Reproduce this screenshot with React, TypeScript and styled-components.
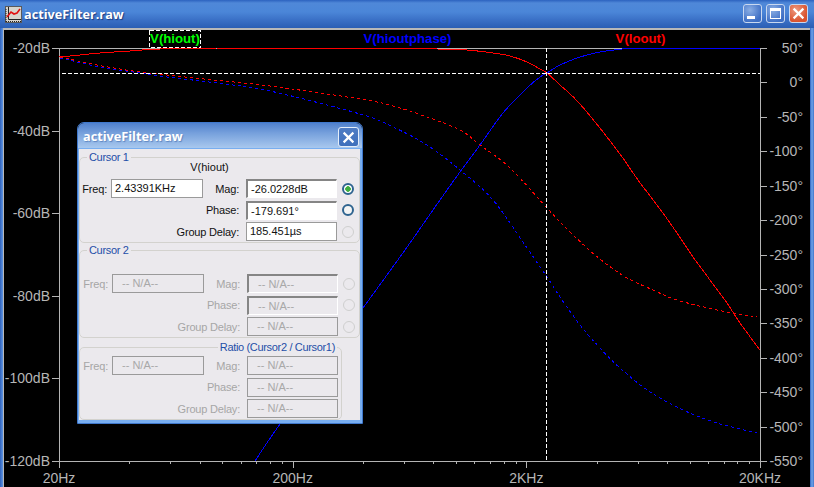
import styled, { createGlobalStyle } from "styled-components";

type Pt = [number, number];

const redSolid: Pt[] = [[59, 57], [70, 56], [100, 53], [130, 51], [160, 49], [216, 49]];
const redSolid2: Pt[] = [[437, 49], [467, 50], [493, 53], [510, 56], [527, 62], [540, 69], [547, 73], [560, 85], [580, 104], [617, 150], [638, 180], [660, 209], [677, 233], [693, 257], [710, 280], [727, 303], [740, 323], [760, 350]];
const blueSolid: Pt[] = [[255, 461], [280, 424], [363, 308], [405, 250], [440, 200], [460, 172], [480, 145], [503, 113], [527, 88], [540, 77], [547, 73], [560, 65], [580, 57], [600, 52], [630, 48]];
const redDash: Pt[] = [[60, 57], [97, 65], [133, 71], [167, 75], [213, 80], [270, 86], [360, 99], [393, 106], [427, 117], [460, 130], [480, 145], [510, 168], [547, 208], [563, 225], [587, 248], [605, 263], [627, 278], [653, 290], [677, 300], [717, 310], [757, 317]];
const blueDash: Pt[] = [[60, 58], [100, 67], [133, 72], [167, 77], [217, 83], [270, 91], [360, 114], [393, 127], [427, 145], [460, 170], [493, 200], [527, 248], [547, 277], [560, 297], [580, 325], [600, 348], [620, 368], [650, 392], [683, 410], [717, 423], [757, 433]];

// catmull-rom through the read-off points
function curve(p: Pt[]) {
  let d = `M${p[0][0]} ${p[0][1]}`;
  for (let i = 0; i < p.length - 1; i++) {
    const a = p[Math.max(i - 1, 0)];
    const b = p[i];
    const c = p[i + 1];
    const e = p[Math.min(i + 2, p.length - 1)];
    d += `C${b[0] + (c[0] - a[0]) / 6} ${b[1] + (c[1] - a[1]) / 6} ${c[0] - (e[0] - b[0]) / 6} ${c[1] - (e[1] - b[1]) / 6} ${c[0]} ${c[1]}`;
  }
  return d;
}

const LEFT = 59;
const RIGHT = 760;
const TOP = 48;
const BOTTOM = 461;
const DECADE = (RIGHT - LEFT) / 3;

const dbLabels = ["-20dB", "-40dB", "-60dB", "-80dB", "-100dB", "-120dB"];
const degLabels = ["50°", "0°", "-50°", "-100°", "-150°", "-200°", "-250°", "-300°", "-350°", "-400°", "-450°", "-500°", "-550°"];
const freqLabels = ["20Hz", "200Hz", "2KHz", "20KHz"];

function Chart() {
  const minor: number[] = [];
  for (let d = 0; d < 3; d++) {
    for (let k = 2; k < 10; k++) minor.push(LEFT + DECADE * (d + Math.log10(k)));
  }
  return (
    <PlotSvg viewBox="4 30 806 457" width={806} height={457}>
      <g stroke="#b4b4b4" fill="none" shapeRendering="crispEdges">
        <path d={`M${LEFT}.5 ${TOP}V${BOTTOM}M${RIGHT}.5 ${TOP}V${BOTTOM}M52 ${TOP}.5H767M52 ${BOTTOM}.5H767`} />
        {dbLabels.map((_, i) => {
          const y = Math.round(TOP + ((BOTTOM - TOP) / 5) * i);
          return <path key={i} d={`M52 ${y}.5H59`} />;
        })}
        {degLabels.map((_, i) => {
          const y = Math.round(TOP + ((BOTTOM - TOP) / 12) * i);
          return <path key={i} d={`M760 ${y}.5H767`} />;
        })}
        {minor.map((x, i) => (
          <path key={i} d={`M${Math.round(x)}.5 ${BOTTOM}V464`} />
        ))}
        {[0, 1, 2, 3].map((d) => (
          <path key={d} d={`M${Math.round(LEFT + DECADE * d)}.5 ${BOTTOM}V468`} />
        ))}
      </g>

      <g fill="none" strokeWidth={1} shapeRendering="crispEdges">
        <path d={curve(redDash)} stroke="#ff0000" strokeDasharray="3 3" />
        <path d={curve(blueDash)} stroke="#0000ff" strokeDasharray="3 3" />
        <path d={curve(redSolid)} stroke="#ff0000" />
        <path d="M217 48.5H437" stroke="#ff0000" />
        <path d={curve(redSolid2)} stroke="#ff0000" />
        <path d={curve(blueSolid)} stroke="#0000ff" />
        <path d="M630 48.5H760" stroke="#0000ff" />
        <path d="M62 73.5H760M546.5 48V461" stroke="#ffffff" strokeDasharray="4 2" />
        <rect x="149.5" y="30.5" width="51" height="17" stroke="#ffffff" strokeDasharray="4 2" />
      </g>

      {dbLabels.map((t, i) => (
        <AxisText key={t} x={50} y={TOP + ((BOTTOM - TOP) / 5) * i + 5} textAnchor="end">{t}</AxisText>
      ))}
      {degLabels.map((t, i) => (
        <AxisText key={t} x={803} y={TOP + ((BOTTOM - TOP) / 12) * i + 5} textAnchor="end">{t}</AxisText>
      ))}
      {freqLabels.map((t, i) => (
        <AxisText key={t} x={LEFT + DECADE * i} y={483} textAnchor="middle">{t}</AxisText>
      ))}

      <TraceName x={175} y={43} textAnchor="middle" fill="#00ff00">V(hiout)</TraceName>
      <TraceName x={407.5} y={43} textAnchor="middle" fill="#0000ff">V(hioutphase)</TraceName>
      <TraceName x={640.5} y={43} textAnchor="middle" fill="#ff0000">V(loout)</TraceName>
    </PlotSvg>
  );
}

function AppIcon() {
  return (
    <svg width="17" height="17" viewBox="0 0 17 17">
      <rect x="0.5" y="0.5" width="16" height="16" fill="#d8d4cc" stroke="#5a5a5a" />
      <path d="M3.5 1V13.5H16" stroke="#222" fill="none" />
      <path d="M1 3V16M1 15.5H16" stroke="#222" strokeDasharray="1 1" fill="none" />
      <path d="M2 11L6 6L9 8L12 7L15 3" stroke="#e01010" strokeWidth="1.6" fill="none" />
    </svg>
  );
}

function CloseGlyph({ size }: { size: number }) {
  return (
    <svg width={size} height={size} viewBox="0 0 12 12">
      <path d="M1.5 1.5L10.5 10.5M10.5 1.5L1.5 10.5" stroke="#fff" strokeWidth="2" fill="none" />
    </svg>
  );
}

type RowProps = {
  label: string;
  value: string;
  sunken?: boolean;
  off?: boolean;
  radio?: "on" | "idle" | "off";
  freq?: string;
};

function Row({ label, value, sunken, off, radio, freq }: RowProps) {
  return (
    <>
      {freq ? (
        <>
          <Label $off={off} $flush>Freq:</Label>
          <Box $off={off}>{freq}</Box>
          <Label $off={off}>{label}</Label>
        </>
      ) : (
        <Label $off={off} $span={3}>{label}</Label>
      )}
      <Box $off={off} $sunken={sunken}>{value}</Box>
      {radio && <Radio $state={radio} />}
    </>
  );
}

export default function App() {
  return (
    <>
      <Global />
      <Window>
        <TitleBar>
          <AppIcon />
          <WindowTitle>activeFilter.raw</WindowTitle>
          <WindowButtons>
            <WinButton><MinBar /></WinButton>
            <WinButton><MaxBox /></WinButton>
            <WinButton $close><CloseGlyph size={13} /></WinButton>
          </WindowButtons>
        </TitleBar>
        <Plot>
          <Chart />
          <Dialog>
            <DialogTitle>
              <DialogName>activeFilter.raw</DialogName>
              <DialogClose><CloseGlyph size={13} /></DialogClose>
            </DialogTitle>
            <DialogBody>
              <Group $top={1}>
                <GroupName>Cursor 1</GroupName>
                <TraceLabel>V(hiout)</TraceLabel>
                <Fields>
                  <Row freq="2.43391KHz" label="Mag:" value="-26.0228dB" sunken radio="on" />
                  <Row label="Phase:" value="-179.691°" sunken radio="idle" />
                  <Row label="Group Delay:" value="185.451µs" radio="off" />
                </Fields>
              </Group>
              <Group>
                <GroupName>Cursor 2</GroupName>
                <Fields $shift $pad={17}>
                  <Row off freq="-- N/A--" label="Mag:" value="-- N/A--" sunken radio="off" />
                  <Row off label="Phase:" value="-- N/A--" sunken radio="off" />
                  <Row off label="Group Delay:" value="-- N/A--" radio="off" />
                </Fields>
              </Group>
              <Group $top={2} $narrow>
                <GroupName $right>Ratio (Cursor2 / Cursor1)</GroupName>
                <Fields $shift $pad={2}>
                  <Row off freq="-- N/A--" label="Mag:" value="-- N/A--" />
                  <Row off label="Phase:" value="-- N/A--" />
                  <Row off label="Group Delay:" value="-- N/A--" />
                </Fields>
              </Group>
            </DialogBody>
          </Dialog>
        </Plot>
      </Window>
    </>
  );
}

const Global = createGlobalStyle`
  html, body {
    margin: 0;
    padding: 0;
    background: #000;
    overflow: hidden;
  }
`;

const Window = styled.div`
  width: 814px;
  height: 487px;
  display: flex;
  flex-direction: column;
  overflow: hidden;
  background: linear-gradient(90deg, #2f62bd 0, #5f95e0 3px, #2f62bd 4px, #2f62bd 810px, #6ea4ea 812px, #3f73c8 814px);
  font-family: "Liberation Sans", Arial, sans-serif;
`;

const TitleBar = styled.div`
  height: 28px;
  flex: none;
  display: flex;
  align-items: center;
  padding: 0 6px 0 5px;
  background: linear-gradient(180deg, #2c62bf 0, #4f88d8 3px, #4b86d8 12px, #3a70c6 20px, #2a5eb4 28px);
`;

const WindowTitle = styled.div`
  margin-left: 2px;
  color: #fff;
  font: bold 12.7px "Open Sans", sans-serif;
  text-shadow: 1px 1px 1px #1c3c80;
`;

const WindowButtons = styled.div`
  margin-left: auto;
  display: flex;
  gap: 4px;
  margin-top: -1px;
`;

const WinButton = styled.div<{ $close?: boolean }>`
  width: 19px;
  height: 19px;
  box-sizing: border-box;
  position: relative;
  display: flex;
  align-items: center;
  justify-content: center;
  border: 1px solid #c8d8f0;
  border-radius: 3px;
  background: ${(p) =>
    p.$close
      ? "radial-gradient(circle at 35% 30%, #ee9a80, #d9532f 70%)"
      : "radial-gradient(circle at 35% 30%, #8aaee4, #3d6ec4 75%)"};
`;

const MinBar = styled.div`
  position: absolute;
  left: 3px;
  bottom: 3px;
  width: 8px;
  height: 3px;
  background: #fff;
`;

const MaxBox = styled.div`
  width: 11px;
  height: 11px;
  box-sizing: border-box;
  border: 1px solid #fff;
  border-top-width: 3px;
`;

const Plot = styled.div`
  position: relative;
  flex: 1;
  min-height: 0;
  margin: 0 4px 0 3px;
  background: #000;
  border-top: 2px solid #b8b8b8;
  border-left: 1px solid #b8b8b8;
`;

const PlotSvg = styled.svg`
  display: block;
`;

const AxisText = styled.text`
  font: 14px "Liberation Sans", Arial, sans-serif;
  fill: #b6b6b6;
`;

const TraceName = styled.text`
  font: bold 13.2px "Liberation Sans", Arial, sans-serif;
`;

const Dialog = styled.div`
  position: absolute;
  left: 73px;
  top: 92px;
  width: 286px;
  height: 302px;
  box-sizing: border-box;
  display: flex;
  flex-direction: column;
  border: 1px solid #3f78cc;
  border-radius: 7px 7px 0 0;
  overflow: hidden;
`;

const DialogTitle = styled.div`
  height: 25px;
  flex: none;
  display: flex;
  align-items: center;
  justify-content: space-between;
  padding: 0 3px 0 5px;
  background: linear-gradient(180deg, #4f80cc 0, #76a0dc 10px, #a8c8ee 25px);
`;

const DialogName = styled.div`
  color: #fff;
  font: bold 12.7px "Open Sans", sans-serif;
  text-shadow: 1px 1px 1px #5f86c0;
`;

const DialogClose = styled.div`
  width: 21px;
  height: 20px;
  box-sizing: border-box;
  display: flex;
  align-items: center;
  justify-content: center;
  border: 1px solid #e4eefa;
  border-radius: 3px;
  background: linear-gradient(180deg, #4f7cc4, #3f70bc);
  margin-top: 3px;
`;

const DialogBody = styled.div`
  flex: 1;
  min-height: 0;
  display: flex;
  flex-direction: column;
  align-items: flex-start;
  background: #ebe9ed;
  border: solid #78aef0;
  border-width: 1px 2px 3px 1px;
`;

const Group = styled.fieldset<{ $top?: number; $narrow?: boolean }>`
  flex: none;
  width: ${(p) => (p.$narrow ? 263 : 281)}px;
  margin: ${(p) => p.$top ?? 0}px 0 0 0;
  padding: 0;
  box-sizing: border-box;
  border: 1px solid #d3d2ce;
  border-radius: 5px;
  min-width: 0;
`;

const GroupName = styled.legend<{ $right?: boolean }>`
  margin-left: ${(p) => (p.$right ? "auto" : "7px")};
  margin-right: ${(p) => (p.$right ? "4px" : "0")};
  padding: 0 2px;
  font-size: 11px;
  letter-spacing: -0.33px;
  line-height: 14px;
  color: #1f4fa8;
`;

const TraceLabel = styled.div`
  text-align: center;
  font-size: 11px;
  line-height: 13px;
  margin: -3px 20px 5px 0;
  color: #111;
`;

const Fields = styled.div<{ $shift?: boolean; $pad?: number }>`
  display: grid;
  grid-template-columns: 27px 92px 35px 91px 14px;
  grid-auto-rows: 19px;
  column-gap: 4px;
  row-gap: 2.5px;
  align-items: center;
  padding: ${(p) => p.$pad ?? 0}px 0 1px ${(p) => (p.$shift ? 1 : 0)}px;
  font-size: 11px;
`;

const Label = styled.div<{ $off?: boolean; $flush?: boolean; $span?: number }>`
  grid-column: ${(p) => (p.$span ? `span ${p.$span}` : "auto")};
  text-align: right;
  white-space: nowrap;
  letter-spacing: -0.2px;
  padding-right: ${(p) => (p.$flush ? 0 : 3)}px;
  color: ${(p) => (p.$off ? "#a6a6a6" : "#111")};
`;

const Box = styled.div<{ $off?: boolean; $sunken?: boolean }>`
  height: 19px;
  box-sizing: border-box;
  line-height: 17px;
  white-space: nowrap;
  padding-left: ${(p) => (p.$off ? 9 : 3)}px;
  color: ${(p) => (p.$off ? "#a8a8a8" : "#111")};
  background: ${(p) => (p.$off ? "transparent" : "#fff")};
  border: 1px solid #9a9a9a;
  ${(p) =>
    p.$sunken &&
    `border-width: 2px 1px 1px 2px;
     border-color: #858585 #fff #fff #858585;
     line-height: 16px;`}
`;

const Radio = styled.div<{ $state: "on" | "idle" | "off" }>`
  width: 12px;
  height: 12px;
  box-sizing: border-box;
  justify-self: center;
  border-radius: 50%;
  border: ${(p) => (p.$state === "off" ? "1px solid #cfcfcf" : "2px solid #2f6490")};
  background: ${(p) =>
    p.$state === "on"
      ? "radial-gradient(circle, #3fae3f 0 2.5px, #fff 3px)"
      : p.$state === "idle"
        ? "#f4f4f4"
        : "transparent"};
`;
